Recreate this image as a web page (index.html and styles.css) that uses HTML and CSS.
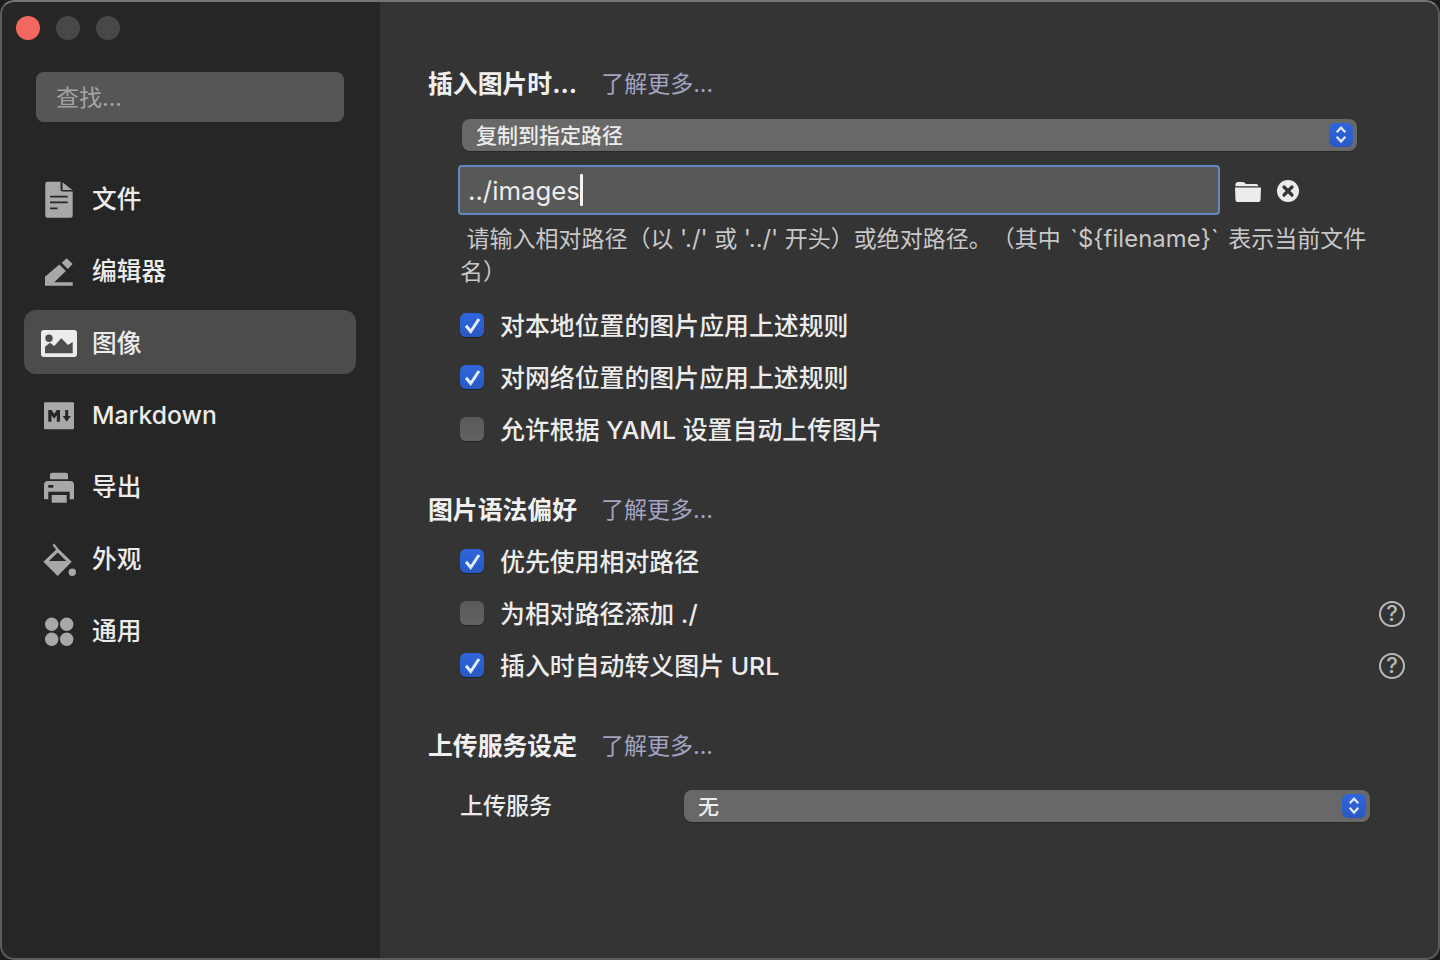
FILE: index.html
```html
<!DOCTYPE html>
<html lang="zh-CN">
<head>
<meta charset="utf-8">
<title>偏好设置</title>
<link rel="stylesheet" href="styles.css">
</head>
<body>
<div class="window">
  <aside class="sidebar">
    <div class="lights"><span class="light red"></span><span class="light"></span><span class="light"></span></div>
    <div class="search">查找...</div>
    <nav class="nav">
      <div class="nav-item">
        <svg class="nav-icon" viewBox="0 0 36 36"><path fill="#a8a8a8" d="M4.300 3.700a2 2 0 0 1 2-2H19.500v7.300a2.500 2.500 0 0 0 2.500 2.500h9.700v24.200a2 2 0 0 1-2 2H6.300a2 2 0 0 1-2-2zM21.500 2.200l9.800 7.800h-9.800z"/><path stroke="#262626" stroke-width="1.800" fill="none" d="M9 16.700h17.700M9 22.300h17.700M9 28.300h7.500"/></svg>
        <span>文件</span>
      </div>
      <div class="nav-item">
        <svg class="nav-icon" viewBox="0 0 36 36"><path fill="#a8a8a8" d="M4 33.700v-9L18.300 12.500l6.600 6.500-11.600 11.300h18.400v3.400zM20.700 10.700l5-4.400 6 5.700-5 5z"/></svg>
        <span>编辑器</span>
      </div>
      <div class="nav-item active">
        <svg class="nav-icon" viewBox="0 0 36 36"><path fill="#ececec" fill-rule="evenodd" d="M3 6h30a3 3 0 0 1 3 3v21a3 3 0 0 1-3 3H3a3 3 0 0 1-3-3V9a3 3 0 0 1 3-3zM8 10.600a3.700 3.700 0 1 0 0 7.400 3.700 3.700 0 0 0 0-7.400zM4 29.300h27.700V18l-4.700 3-6.700-6.700-7 7.700-4.300-3.300-5 4z"/></svg>
        <span>图像</span>
      </div>
      <div class="nav-item">
        <svg class="nav-icon" viewBox="0 0 36 36"><path fill="#a8a8a8" d="M4 6.300h28a1 1 0 0 1 1 1v25a1 1 0 0 1-1 1H4a1 1 0 0 1-1-1v-25a1 1 0 0 1 1-1z"/><path fill="#262626" d="M7.300 25.700V14h3.200l2.700 4 2.600-4H19v11.700h-3.200v-6.500l-2.600 3.500-2.700-3.500v6.500zM24.200 14h3v6h2.500l-4 5.700-4-5.700h2.500z"/></svg>
        <span class="latin">Markdown</span>
      </div>
      <div class="nav-item">
        <svg class="nav-icon" viewBox="0 0 36 36"><path fill="#a8a8a8" d="M9 6.700a2 2 0 0 1 2-2h14a2 2 0 0 1 2 2v4.600H9zM3 17a4 4 0 0 1 4-4h22a4 4 0 0 1 4 4v13.300a1 1 0 0 1-1 1H4a1 1 0 0 1-1-1z"/><rect fill="#262626" x="7.300" y="23.700" width="21.400" height="8"/><rect fill="#a8a8a8" x="10.700" y="27" width="15" height="7.700"/><rect fill="#262626" x="7.300" y="17" width="5" height="2.700"/></svg>
        <span>导出</span>
      </div>
      <div class="nav-item">
        <svg class="nav-icon" viewBox="0 0 36 36"><path fill="#a8a8a8" fill-rule="evenodd" d="M16.700 8.300l14 13.400L16.700 36 2.300 21.700zM16.700 12.500L8 21h17.300z"/><path fill="none" stroke="#a8a8a8" stroke-width="2.200" d="M12.300 4.300l6.700 8.400"/><circle fill="#a8a8a8" cx="31.300" cy="32.300" r="3.700"/></svg>
        <span>外观</span>
      </div>
      <div class="nav-item">
        <svg class="nav-icon" viewBox="0 0 36 36"><g fill="#a8a8a8"><circle cx="10.700" cy="12.300" r="6.700"/><circle cx="25.700" cy="12.300" r="6.700"/><circle cx="10.700" cy="27.300" r="6.700"/><circle cx="25.700" cy="27.300" r="6.700"/></g></svg>
        <span>通用</span>
      </div>
    </nav>
  </aside>
  <main class="main">
    <section class="section first">
      <h2 class="heading">插入图片时...<a class="more">了解更多...</a></h2>
      <div class="select wide"><span class="select-text">复制到指定路径</span><span class="stepper"><svg viewBox="0 0 24 24"><path d="M7.700 9.300L12 4.700l4.300 4.600M7.700 13.700L12 18.500l4.300-4.800"/></svg></span></div>
      <div class="path-row">
        <div class="input"><span>../images</span><i class="caret"></i></div>
        <svg class="folder" viewBox="0 0 28 24"><path fill="#ececec" d="M1.500 5.500a2.500 2.500 0 0 1 2.500-2.500h5.500l2.500 2h10a2.500 2.500 0 0 1 2.500 2.200H1.500zM1 8.500h26l-.5 12.500a2 2 0 0 1-2 2h-21a2 2 0 0 1-2-2z"/></svg>
        <svg class="clear" viewBox="0 0 22 22"><circle cx="11" cy="11" r="11" fill="#ececec"/><path stroke="#343434" stroke-width="3.200" stroke-linecap="round" d="M7 7l8 8M15 7l-8 8"/></svg>
      </div>
      <p class="help">&nbsp;请输入相对路径（以 <span class="lat">'./'</span> 或 <span class="lat">'../'</span> 开头）或绝对路径。（其中 <span class="lat fn">`${filename}`</span> 表示当前文件<br>名）</p>
      <label class="row check-first"><span class="box on"><svg viewBox="0 0 24 24"><path d="M6 12.700l4.700 5.800L19 6"/></svg></span><span class="row-text">对本地位置的图片应用上述规则</span></label>
      <label class="row"><span class="box on"><svg viewBox="0 0 24 24"><path d="M6 12.700l4.700 5.800L19 6"/></svg></span><span class="row-text">对网络位置的图片应用上述规则</span></label>
      <label class="row"><span class="box"></span><span class="row-text">允许根据 YAML 设置自动上传图片</span></label>
    </section>
    <section class="section">
      <h2 class="heading">图片语法偏好<a class="more">了解更多...</a></h2>
      <label class="row after-heading"><span class="box on"><svg viewBox="0 0 24 24"><path d="M6 12.700l4.700 5.800L19 6"/></svg></span><span class="row-text">优先使用相对路径</span></label>
      <label class="row"><span class="box"></span><span class="row-text">为相对路径添加 ./</span><span class="help-btn">?</span></label>
      <label class="row"><span class="box on"><svg viewBox="0 0 24 24"><path d="M6 12.700l4.700 5.800L19 6"/></svg></span><span class="row-text">插入时自动转义图片 URL</span><span class="help-btn">?</span></label>
    </section>
    <section class="section">
      <h2 class="heading">上传服务设定<a class="more">了解更多...</a></h2>
      <div class="service">
        <span class="service-label">上传服务</span>
        <div class="select grow"><span class="select-text">无</span><span class="stepper"><svg viewBox="0 0 24 24"><path d="M7.700 9.300L12 4.700l4.300 4.600M7.700 13.700L12 18.500l4.300-4.800"/></svg></span></div>
      </div>
    </section>
  </main>
</div>
</body>
</html>
```

FILE: styles.css
```css
* { box-sizing: border-box; }
html, body { margin: 0; height: 100%; background: #1c1c1c; }
body {
  font-family: "Inter", "Noto Sans CJK SC", sans-serif;
  font-weight: 500;
  color: #ececec;
  overflow: hidden;
  text-spacing-trim: space-all;
}
.window {
  width: 1440px;
  height: 960px;
  display: flex;
  border-radius: 14px;
  overflow: hidden;
  position: relative;
}
.window::after {
  content: "";
  position: absolute;
  inset: 0;
  border-radius: 14px;
  border: 2px solid #5c5c5c;
  border-top-color: #747474;
  pointer-events: none;
}
.sidebar {
  width: 380px;
  flex: none;
  background: #262626;
  padding: 16px 24px 0 24px;
}
.lights { display: flex; gap: 16px; margin-left: -8px; }
.light { width: 24px; height: 24px; border-radius: 50%; background: #484848; }
.light.red { background: #f4695f; }
.search {
  margin: 32px 12px 0;
  height: 50px;
  background: #565656;
  border-radius: 8px;
  padding-left: 20px;
  font-size: 23px;
  font-weight: 400;
  line-height: 52px;
  color: #a3a3a3;
}
.nav { margin-top: 44px; display: flex; flex-direction: column; gap: 8px; }
.nav-item {
  height: 64px;
  display: flex;
  align-items: center;
  gap: 15px;
  padding-left: 17px;
  border-radius: 12px;
  font-size: 24.7px;
  color: #ececec;
}
.nav-item span { margin-top: -2px; }
.nav-item .latin { margin-top: 2px; }
.nav-item.active { background: #4c4c4c; }
.nav-icon { width: 36px; height: 36px; flex: none; overflow: visible; }
.main {
  flex: 1;
  background: #343434;
  padding: 0 34px 0 48px;
}
.section { margin-top: 32px; }
.section.first { margin-top: 0; padding-top: 62px; }
.heading {
  margin: 0;
  height: 40px;
  display: flex;
  align-items: center;
  font-size: 24.85px;
  font-weight: 700;
  color: #f0f0f0;
}
.more {
  margin-left: 24px;
  font-size: 23px;
  font-weight: 400;
  color: #a3a3c2;
}
.select {
  height: 32px;
  background: #686868;
  border-radius: 8px;
  display: flex;
  align-items: center;
  justify-content: space-between;
  padding: 0 4px 0 14px;
  font-size: 21px;
  color: #ececec;
  box-shadow: 0 1px 1px rgba(0,0,0,.25);
}
.select-text { margin-top: -3px; }
.select.wide { margin: 17px 49px 0 34px; }
.select.grow { flex: 1; margin-right: 36px; }
.stepper {
  width: 24px;
  height: 24px;
  border-radius: 6px;
  background: linear-gradient(#2f66dc, #2958c4);
  display: flex;
}
.stepper svg { width: 24px; height: 24px; fill: none; stroke: #dfe8fb; stroke-width: 2.200; }
.path-row { display: flex; align-items: center; margin: 14px 0 0 30px; }
.input {
  width: 762px;
  height: 50px;
  background: #585858;
  border: 2px solid #6288c4;
  border-radius: 4px;
  display: flex;
  align-items: center;
  padding-left: 8px;
  font-size: 25.800px;
  font-weight: 400;
  color: #ececec;
}
.caret { width: 3px; height: 32px; border-radius: 1px; background: #f4f4f4; }
.folder { width: 28px; height: 24px; margin: 2px 0 0 14px; }
.clear { width: 22px; height: 22px; margin: 2px 0 0 15px; }
.help {
  margin: 7px 34px 0 32px;
  font-size: 23px;
  line-height: 33px;
  font-weight: 400;
  color: #c8c8c8;
}
.lat { font-size: 23.800px; }
.lat.fn { margin: 0 3px; letter-spacing: .1px; }
.row {
  height: 52px;
  margin-left: 32px;
  padding-bottom: 2px;
  display: flex;
  align-items: center;
  gap: 16px;
  font-size: 24.900px;
  color: #ececec;
}
.row-text { margin-top: -2px; }
.check-first { margin-top: 11px; }
.after-heading { margin-top: 8px; }
.box {
  width: 24px;
  height: 24px;
  flex: none;
  border-radius: 6px;
  background: linear-gradient(#5a5a5a, #626262);
  box-shadow: 0 1px 1px rgba(0,0,0,.3);
  display: flex;
}
.box.on { background: linear-gradient(#2f66dc, #2958c4); }
.box svg { width: 24px; height: 24px; fill: none; stroke: #e6edfc; stroke-width: 3; }
.help-btn {
  margin: 2px 1px 0 auto;
  width: 26px;
  height: 26px;
  flex: none;
  border: 2.300px solid #b8b8b8;
  border-radius: 50%;
  color: #b8b8b8;
  font-size: 22px;
  line-height: 21px;
  text-align: center;
}
.service { display: flex; align-items: center; margin: 26px 0 0 32px; }
.service-label { width: 224px; height: 32px; font-size: 23px; line-height: 32px; color: #ececec; }
```
